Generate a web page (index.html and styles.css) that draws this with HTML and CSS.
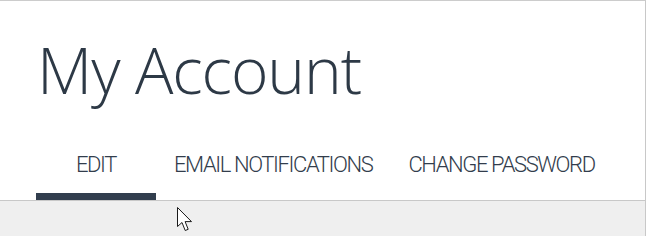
FILE: index.html
```html
<!DOCTYPE html>
<html lang="en">
<head>
<meta charset="utf-8">
<title>My Account</title>
<link rel="stylesheet" href="styles.css">
</head>
<body>
<div class="page">
  <header class="panel">
    <h1 class="title">My Account</h1>
    <nav class="tabs">
      <a class="tab tab-active" href="#">EDIT</a>
      <a class="tab" href="#">EMAIL NOTIFICATIONS</a>
      <a class="tab" href="#">CHANGE PASSWORD</a>
    </nav>
  </header>
  <div class="below"></div>
  <svg class="cursor" width="16" height="26" viewBox="0 0 16 26" aria-hidden="true">
    <path d="M0.5 0.5 L0.5 19.5 L5 15.5 L8.2 23.5 L11.2 22.3 L8.1 14.6 L14.5 14.6 Z" fill="#ffffff" stroke="#1a1a1a" stroke-width="1" stroke-linejoin="miter"/>
  </svg>
</div>
</body>
</html>
```

FILE: styles.css
```css
* { box-sizing: border-box; }

html, body {
  margin: 0;
  padding: 0;
  background: #ffffff;
}

.page {
  position: relative;
  width: 646px;
  height: 236px;
  border-top: 1px solid #cccccc;
  border-right: 1px solid #c8c8c8;
  display: flex;
  flex-direction: column;
  overflow: hidden;
}

.panel {
  background: #ffffff;
  padding-left: 36px;
  border-bottom: 1px solid #c8c8c8;
}

.title {
  margin: 37px 0 0 1px;
  font-family: "Open Sans", sans-serif;
  font-weight: 300;
  font-size: 64px;
  line-height: 64px;
  color: #2d3946;
  letter-spacing: -1.1px;
  white-space: nowrap;
}

.tabs {
  display: flex;
  margin-top: 51px;
}

.tab {
  flex: 0 0 auto;
  min-width: 120px;
  padding: 0 18px 16px;
  border-bottom: 7px solid transparent;
  text-align: center;
  text-decoration: none;
  white-space: nowrap;
  font-family: "Roboto", sans-serif;
  font-weight: 300;
  font-size: 22px;
  line-height: 24px;
  letter-spacing: -1.4px;
  color: #323d4c;
}

.tab-active {
  border-bottom-color: #323e4e;
}

.below {
  flex: 1;
  background: #efefef;
}

.cursor {
  position: absolute;
  left: 177px;
  top: 206px;
}
```
